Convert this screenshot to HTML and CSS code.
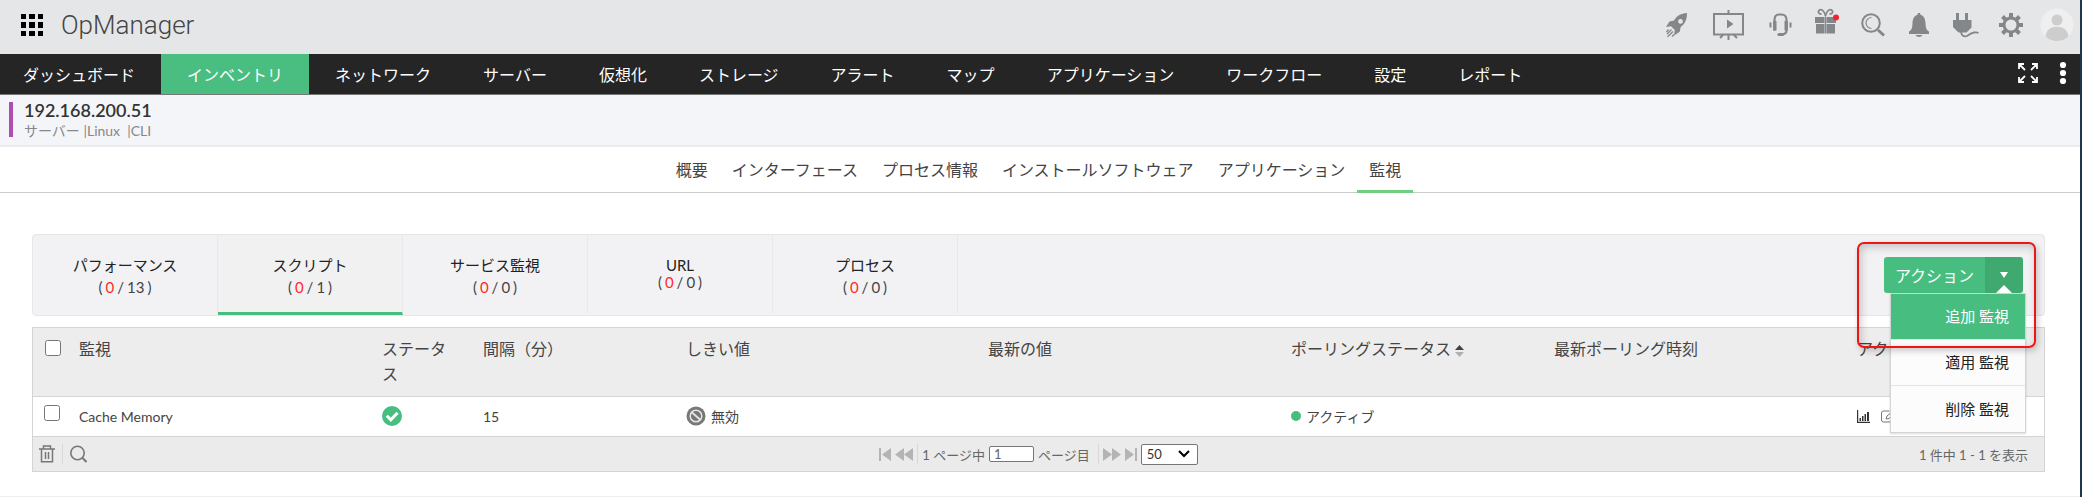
FILE: index.html
```html
<!DOCTYPE html>
<html lang="ja">
<head>
<meta charset="utf-8">
<title>OpManager - 192.168.200.51</title>
<meta name="viewport" content="width=device-width, initial-scale=1">
<link rel="stylesheet" href="styles.css">
</head>
<body>
<header class="topbar">
  <button class="icon-btn" aria-label="アプリ一覧">
    <svg width="24" height="24" viewBox="0 0 24 24" fill="#000"><path d="M1 1h5v5H1zM9 1h6v5H9zM18 1h5v5h-5zM1 9h5v6H1zM9 9h6v6H9zM18 9h5v6h-5zM1 18h5v5H1zM9 18h6v5H9zM18 18h5v5h-5z"/></svg>
  </button>
  <span class="brand">OpManager</span>
  <div class="tools">
    <button class="icon-btn" aria-label="クイックスタート">
      <svg width="24" height="26" viewBox="0 0 24 26" fill="#84878a"><path fill-rule="evenodd" d="M22 1c-6 .4-10 2.6-13 7.400L4.500 9.500 1 15l5-.8 3.800 3.900L9 23.500l5.700-3.800 1-4.600C20 12 22 7.500 22 1zM15.500 7a2.400 2.400 0 1 1 0 4.800 2.400 2.400 0 0 1 0-4.800z"/><path d="M6.500 17.500L2 22M8 19.500l-5.500 5.200M3.500 17.500L1.500 20M9 22.500l-2 2" stroke="#84878a" stroke-width="1.300"/></svg>
    </button>
    <button class="icon-btn screen" aria-label="デモ">
      <svg width="32" height="30" viewBox="0 0 32 30" fill="none" stroke="#84878a" stroke-width="2"><path d="M1 4h29v20.500H1zM15.500 0v4M15.500 24v6M10 25l-3 3M21 25l3 3"/><path d="M14 9.500l6.500 4.500-6.500 4.500z" fill="#84878a" stroke="none"/></svg>
    </button>
    <button class="icon-btn" aria-label="サポート">
      <svg width="24" height="26" viewBox="0 0 24 26" fill="none" stroke="#84878a"><path d="M5.500 18.500V8Q5.500 2.500 10 2.500h2.500Q17.500 2.500 17.500 8v10.500q0 3.500-4.500 4" stroke-width="2.200"/><path d="M5.800 9v9.500M17.200 9v9.500" stroke-width="3.400"/><path d="M1.500 10.500v5M21.500 10.500v5" stroke-width="2"/><path d="M10 22.500h3.500" stroke-width="3.200" stroke-linecap="round"/></svg>
    </button>
    <button class="icon-btn gift" aria-label="新着情報">
      <svg width="26" height="26" viewBox="0 0 26 26" fill="#84878a"><path d="M0 9h9.500v6H0zM11.500 9h9.500v6h-9.500zM1 16h8.500v9.500H1zM11.500 16H20v9.500h-8.500zM9.900 9h1.200v16.500H9.900z"/><path d="M10.500 8.500C10 4 7 .5 4.500 2 2 4 4.500 7 6.500 5.500M10.500 8.500C11 4 14 .5 16.500 2 19 4 16.500 7 14.500 5.500" fill="none" stroke="#84878a" stroke-width="1.700"/><circle cx="21" cy="9.500" r="3" fill="#f5222d"/></svg>
    </button>
    <button class="icon-btn" aria-label="検索">
      <svg width="24" height="24" viewBox="0 0 24 24" fill="none" stroke="#84878a"><circle cx="10" cy="10" r="8.800" stroke-width="2"/><path d="M10.500 4.500a5.500 5.500 0 1 0 0 11" stroke-width="1.200"/><path d="M17 17l6 5.500" stroke-width="3"/></svg>
    </button>
    <button class="icon-btn" aria-label="アラーム">
      <svg width="24" height="26" viewBox="0 0 24 26" fill="#84878a"><path d="M11 1h2l.5 1.800C17 4 18.300 7 18.500 11c.2 5 .8 7 3.500 8.500V22H2v-2.500C4.700 18 5.300 16 5.500 11c.2-4 1.500-7 5-8.200zM8.500 23h7q-1 2-3.500 2t-3.500-2z"/></svg>
    </button>
    <button class="icon-btn" aria-label="プラグイン">
      <svg width="26" height="26" viewBox="0 0 26 26" fill="#84878a"><path d="M3 1h3v7h6V1h3v7h3.500v7.500l-5 5h-8L0 15V8h3z"/><path d="M8 20q1 5.500 6 4 4-3 7-3.500 3-.5 4.500.5" fill="none" stroke="#84878a" stroke-width="1.800"/></svg>
    </button>
    <button class="icon-btn" aria-label="設定">
      <svg width="24" height="24" viewBox="0 0 24 24" fill="none" stroke="#84878a"><circle cx="12" cy="12" r="7" stroke-width="3"/><path d="M12 0v4M12 20v4M0 12h4M20 12h4M3.500 3.500l3 3M17.500 17.500l3 3M3.500 20.500l3-3M17.500 6.500l3-3" stroke-width="4"/></svg>
    </button>
  </div>
  <button class="icon-btn" aria-label="アカウント">
    <svg width="34" height="34" viewBox="0 0 34 34"><circle cx="17" cy="17" r="16.500" fill="#efefef"/><circle cx="17" cy="12" r="5.500" fill="#cdcdcd"/><path d="M5.500 28.500C6.500 21.500 11 18.800 17 18.800s10.500 2.700 11.500 9.700A16.500 16.500 0 0 1 5.500 28.500z" fill="#cdcdcd"/></svg>
  </button>
</header>

<nav class="mainnav" aria-label="メイン">
  <div class="mainnav-links">
    <a href="#">ダッシュボード</a>
    <a href="#" class="active">インベントリ</a>
    <a href="#">ネットワーク</a>
    <a href="#">サーバー</a>
    <a href="#">仮想化</a>
    <a href="#">ストレージ</a>
    <a href="#">アラート</a>
    <a href="#">マップ</a>
    <a href="#">アプリケーション</a>
    <a href="#">ワークフロー</a>
    <a href="#">設定</a>
    <a href="#">レポート</a>
  </div>
  <div class="mainnav-tools">
    <button class="icon-btn" aria-label="全画面">
      <svg width="20" height="20" viewBox="0 0 20 20" fill="none" stroke="#fff" stroke-width="1.800"><path d="M1 6V1h5M1 1l6 6M14 1h5v5M19 1l-6 6M1 14v5h5M1 19l6-6M14 19h5v-5M19 19l-6-6"/></svg>
    </button>
    <button class="icon-btn" aria-label="メニュー">
      <svg width="8" height="24" viewBox="0 0 8 24" fill="#fff"><circle cx="4" cy="4" r="3.100"/><circle cx="4" cy="12" r="3.100"/><circle cx="4" cy="20" r="3.100"/></svg>
    </button>
  </div>
</nav>

<section class="device">
  <h1>192.168.200.51</h1>
  <p>サーバー |Linux &nbsp;|CLI</p>
</section>

<nav class="subnav" aria-label="デバイス">
  <a href="#">概要</a>
  <a href="#">インターフェース</a>
  <a href="#">プロセス情報</a>
  <a href="#">インストールソフトウェア</a>
  <a href="#">アプリケーション</a>
  <a href="#" class="active">監視</a>
</nav>

<main class="content">
  <div class="monitor-bar">
    <a class="monitor-tab" href="#"><span class="name">パフォーマンス</span><span class="count"><span>(</span><b>0</b><span>/</span><span>13</span><span>)</span></span></a>
    <a class="monitor-tab active" href="#"><span class="name">スクリプト</span><span class="count"><span>(</span><b>0</b><span>/</span><span>1</span><span>)</span></span></a>
    <a class="monitor-tab" href="#"><span class="name">サービス監視</span><span class="count"><span>(</span><b>0</b><span>/</span><span>0</span><span>)</span></span></a>
    <a class="monitor-tab" href="#"><span class="name latin">URL</span><span class="count"><span>(</span><b>0</b><span>/</span><span>0</span><span>)</span></span></a>
    <a class="monitor-tab" href="#"><span class="name">プロセス</span><span class="count"><span>(</span><b>0</b><span>/</span><span>0</span><span>)</span></span></a>
    <div class="action">
      <button class="action-label">アクション</button>
      <button class="action-toggle" aria-label="メニューを開く"><svg width="8" height="8" viewBox="0 0 8 8" fill="#fff"><path d="M0 1h8L4 7z"/></svg></button>
      <svg class="pointer" width="16" height="8" viewBox="0 0 16 8" fill="#fff"><path d="M8 0l8 8H0z"/></svg>
      <div class="menu">
        <button class="active">追加 監視</button>
        <button>適用 監視</button>
        <button>削除 監視</button>
      </div>
      <div class="highlight"></div>
    </div>
  </div>

  <div class="grid">
    <table>
      <colgroup><col class="c-check"><col class="c-name"><col class="c-status"><col class="c-interval"><col class="c-threshold"><col class="c-latest"><col class="c-poll"><col class="c-time"><col class="c-action"></colgroup>
      <thead>
        <tr>
          <th><input type="checkbox" aria-label="すべて選択"></th>
          <th>監視</th>
          <th class="status">ステータス</th>
          <th>間隔（分）</th>
          <th>しきい値</th>
          <th>最新の値</th>
          <th>ポーリングステータス<svg class="sort" width="9" height="12" viewBox="0 0 9 12"><path d="M0 5l4.500-5L9 5z" fill="#444"/><path d="M0 7h9l-4.500 5z" fill="#b0b0b0"/></svg></th>
          <th>最新ポーリング時刻</th>
          <th>アクション</th>
        </tr>
      </thead>
      <tbody>
        <tr>
          <td><input type="checkbox" aria-label="Cache Memory を選択"></td>
          <td>Cache Memory</td>
          <td><svg width="20" height="20" viewBox="0 0 20 20"><circle cx="10" cy="10" r="10" fill="#48bd80"/><path d="M4.800 9.800l4 4 6.800-7" fill="none" stroke="#fff" stroke-width="3"/></svg></td>
          <td>15</td>
          <td><span class="cell-icon"><svg width="20" height="20" viewBox="0 0 20 20"><circle cx="10" cy="10" r="9.500" fill="#777"/><circle cx="10" cy="10" r="5.800" fill="none" stroke="#e4e4e4" stroke-width="1.500"/><path d="M6 6.500l8 7" stroke="#e4e4e4" stroke-width="1.800"/></svg>無効</span></td>
          <td></td>
          <td><span class="cell-icon"><span class="dot"></span>アクティブ</span></td>
          <td></td>
          <td><span class="row-tools">
            <button class="icon-btn" aria-label="グラフ"><svg width="13" height="13" viewBox="0 0 13 13" fill="#333"><path d="M0 0h1.200v11.800H13V13H0zM2.500 8H4v3H2.500zM5 6h1.500v5H5zM7.500 4H9v7H7.500zM10 2h2v9h-2z"/></svg></button>
            <button class="icon-btn" aria-label="編集"><svg width="14" height="13" viewBox="0 0 14 13" fill="none" stroke="#777"><path d="M12.500 6v4q0 2-2 2h-8q-2 0-2-2V3q0-2 2-2h6"/><path d="M5 9l1-3 6-5 1.500 1.500L8 8.500z"/></svg></button>
          </span></td>
        </tr>
      </tbody>
    </table>
    <div class="pager">
      <div class="pager-left">
        <button class="icon-btn" aria-label="削除"><svg width="16" height="18" viewBox="0 0 16 18" fill="none" stroke="#777" stroke-width="1.500"><path d="M0 4h16M4.500 4V1h7v3M2.500 4v12.800h11V4M6.500 7v7M9.500 7v7"/></svg></button>
        <span class="sep"></span>
        <button class="icon-btn" aria-label="検索"><svg width="17" height="18" viewBox="0 0 17 18" fill="none" stroke="#777" stroke-width="1.600"><circle cx="7.500" cy="8" r="6.700"/><path d="M12 12.500l4.500 4.500" stroke-width="2"/></svg></button>
      </div>
      <div class="pager-mid">
        <button class="icon-btn" aria-label="最初のページ"><svg width="12" height="13" viewBox="0 0 12 13" fill="#b4b4b4"><path d="M0 0h2v13H0zM12 0v13L3 6.500z"/></svg></button>
        <button class="icon-btn" aria-label="前のページ"><svg width="18" height="13" viewBox="0 0 18 13" fill="#b4b4b4"><path d="M9 0v13L0 6.500zM18 0v13L9 6.500z"/></svg></button>
        <span class="sep"></span>
        <label for="page">1 ページ中</label>
        <input id="page" type="text" value="1">
        <span class="total">ページ目</span>
        <span class="sep"></span>
        <button class="icon-btn" aria-label="次のページ"><svg width="18" height="13" viewBox="0 0 18 13" fill="#b4b4b4"><path d="M0 0v13l9-6.500zM9 0v13l9-6.500z"/></svg></button>
        <button class="icon-btn" aria-label="最後のページ"><svg width="12" height="13" viewBox="0 0 12 13" fill="#b4b4b4"><path d="M10 0h2v13h-2zM0 0v13l9-6.500z"/></svg></button>
        <span class="size">
          <select aria-label="表示件数"><option>50</option><option>100</option></select>
          <svg width="12" height="8" viewBox="0 0 12 8" fill="none" stroke="#000" stroke-width="2"><path d="M1 1l5 5 5-5"/></svg>
        </span>
      </div>
      <div class="pager-right">1 件中 1 - 1 を表示</div>
    </div>
  </div>
</main>
<footer class="page-end"></footer>
</body>
</html>
```
FILE: styles.css
```css
* { box-sizing: border-box; }

body {
  margin: 0;
  background: #fff;
  border-right: 2px solid #20364a;
  font-family: Lato, "Noto Sans CJK JP", sans-serif;
  font-size: 14px;
  font-weight: 400;
  color: #444;
}

svg { display: block; }
a { color: inherit; text-decoration: none; }
button, input, select { font: inherit; color: inherit; }
.icon-btn { padding: 0; border: 0; background: none; display: block; }

/* Top bar */
.topbar {
  display: flex;
  align-items: center;
  height: 54px;
  padding: 0 6px 4px 20px;
  background: #e5e6e8;
}
.brand {
  margin-left: 17px;
  font-family: "Roboto Slab", Roboto, sans-serif;
  font-size: 26px;
  font-weight: 300;
  line-height: 32px;
  color: #444;
}
.tools {
  display: flex;
  align-items: center;
  gap: 22px;
  margin: 0 17px 0 auto;
}
.tools .icon-btn { width: 24px; }
.tools .screen { width: 32px; margin: 0 2px; }
.gift { padding-bottom: 8px; }

/* Main navigation */
.mainnav {
  display: flex;
  justify-content: space-between;
  height: 41px;
  background: #252525;
  border-bottom: 1px solid #777;
}
.mainnav-links { display: flex; }
.mainnav-links a {
  display: flex;
  align-items: center;
  padding: 0 26px;
  font-size: 16px;
  color: #fff;
  white-space: nowrap;
}
.mainnav-links a:first-child { padding-left: 23px; }
.mainnav-links .active { background: #4abd80; }
.mainnav-tools {
  display: flex;
  align-items: center;
  gap: 21px;
  padding: 0 13px 2px 0;
}

/* Device title */
.device {
  height: 52px;
  padding: 7px 0 0 9px;
  background: #f4f5f8;
  border-bottom: 2px solid #ececee;
}
.device h1, .device p {
  margin: 0;
  padding-left: 11px;
  border-left: 4px solid #b04db0;
}
.device h1 {
  font-size: 18px;
  font-weight: 600;
  line-height: 17px;
  color: #333;
}
.device p { line-height: 23px; height: 18px; color: #888; }

/* Device sub navigation */
.subnav {
  display: flex;
  justify-content: center;
  height: 46px;
  padding-right: 3px;
  border-bottom: 1px solid #ccc;
  font-size: 16px;
}
.subnav a {
  display: flex;
  align-items: center;
  height: 46px;
  padding: 0 12px;
  border-bottom: 3px solid transparent;
}
.subnav .active { border-bottom-color: #6fcf7f; }

/* Monitor type bar */
.content { padding: 41px 35px 24px 32px; }
.monitor-bar {
  display: flex;
  height: 82px;
  margin-bottom: 11px;
  background: #f2f2f5;
  border: 1px solid #e6e6e8;
  border-radius: 4px;
}
.monitor-tab {
  display: flex;
  flex-direction: column;
  align-items: center;
  justify-content: center;
  width: 185px;
  border-right: 1px solid #e9e9eb;
  border-bottom: 3px solid transparent;
}
.monitor-tab.active { background: #f1f1f1; border-bottom-color: #48bd80; }
.name { font-size: 15px; line-height: 26px; color: #222; }
.name.latin { line-height: 16px; }
.count { display: flex; gap: 3px; font-size: 15px; line-height: 18px; }
.count b { font-weight: 400; color: #ff2a2a; }

/* Action button and its menu */
.action {
  position: relative;
  display: flex;
  align-self: flex-start;
  margin: 22px 21px 0 auto;
  height: 36px;
  font-size: 16px;
  color: #fff;
}
.action-label, .action-toggle { padding: 0; border: 0; }
.action-label { width: 101px; background: #48bd80; border-radius: 3px 0 0 3px; }
.action-toggle {
  display: flex;
  align-items: center;
  justify-content: center;
  width: 38px;
  background: #40a970;
  border-radius: 0 3px 3px 0;
}
.pointer { position: absolute; right: 11px; bottom: 0; }
.menu {
  position: absolute;
  top: 36px;
  right: -3px;
  z-index: 2;
  width: 136px;
  background: #fcfcfc;
  border: 1px solid #d4d4d4;
  box-shadow: 0 1px 2px rgba(0, 0, 0, 0.15);
}
.menu button {
  display: block;
  width: 100%;
  height: 46px;
  padding: 0 16px 2px 0;
  border: 0;
  border-bottom: 1px solid #e4e4e4;
  background: none;
  font-size: 15px;
  text-align: right;
  color: #222;
}
.menu button:last-child { border-bottom: 0; }
.menu .active { background: #48bd80; color: #fff; }
.highlight {
  position: absolute;
  top: -15px;
  right: -13px;
  z-index: 3;
  width: 179px;
  height: 106px;
  border: 2px solid #f01414;
  border-radius: 7px;
  box-shadow: 2px 3px 6px rgba(0, 0, 0, 0.2), inset 2px 3px 8px rgba(0, 0, 0, 0.2);
  pointer-events: none;
}

/* Monitor table */
.grid { border: 1px solid #d4d4d4; }
table { width: 100%; border-collapse: collapse; table-layout: fixed; }
.c-check { width: 38px; }
.c-name { width: 303px; }
.c-status { width: 101px; }
.c-interval { width: 203px; }
.c-threshold { width: 302px; }
.c-latest { width: 303px; }
.c-poll { width: 263px; }
.c-time { width: 303px; }
th, td { padding: 0 8px; text-align: left; }
th {
  height: 68px;
  padding-top: 8px;
  vertical-align: top;
  background: #ededed;
  border-bottom: 1px solid #d4d4d4;
  font-size: 16px;
  font-weight: 400;
  line-height: 25px;
}
th.status { padding-right: 16px; }
td { height: 40px; vertical-align: middle; }
input[type="checkbox"] { display: block; width: 16px; height: 16px; margin: 4px 0 0 4px; }
td input[type="checkbox"] { margin: 0 0 6px 3px; }
.sort { display: inline-block; margin-left: 4px; vertical-align: -2px; }
.cell-icon { display: flex; align-items: center; gap: 5px; }
.dot { width: 10px; height: 10px; border-radius: 50%; background: #48bd80; }
.row-tools { display: flex; gap: 11px; }

/* Pager */
.pager {
  display: grid;
  grid-template-columns: 1fr auto 1fr;
  align-items: center;
  height: 35px;
  border-top: 1px solid #d4d4d4;
  background: #ebebeb;
  font-size: 13px;
  color: #666;
}
.pager-left { display: flex; align-items: center; gap: 7px; padding-left: 6px; }
.pager-mid { display: flex; align-items: center; gap: 4px; }
.pager-right { padding-right: 16px; text-align: right; }
.sep { width: 1px; height: 20px; background: #d8d8d8; }
.total { margin-right: 4px; }
#page {
  width: 45px;
  height: 16px;
  padding: 0 4px;
  border: 1px solid #767676;
  border-radius: 2px;
  background: #fff;
}
.size { display: grid; align-items: center; }
.size select {
  grid-area: 1 / 1;
  width: 57px;
  height: 21px;
  padding: 0 5px;
  appearance: none;
  border: 1px solid #767676;
  border-radius: 2px;
  background: #fff;
  color: #333;
}
.size svg { grid-area: 1 / 1; justify-self: end; margin-right: 8px; pointer-events: none; }

.page-end { height: 1px; background: #eee; }
```
